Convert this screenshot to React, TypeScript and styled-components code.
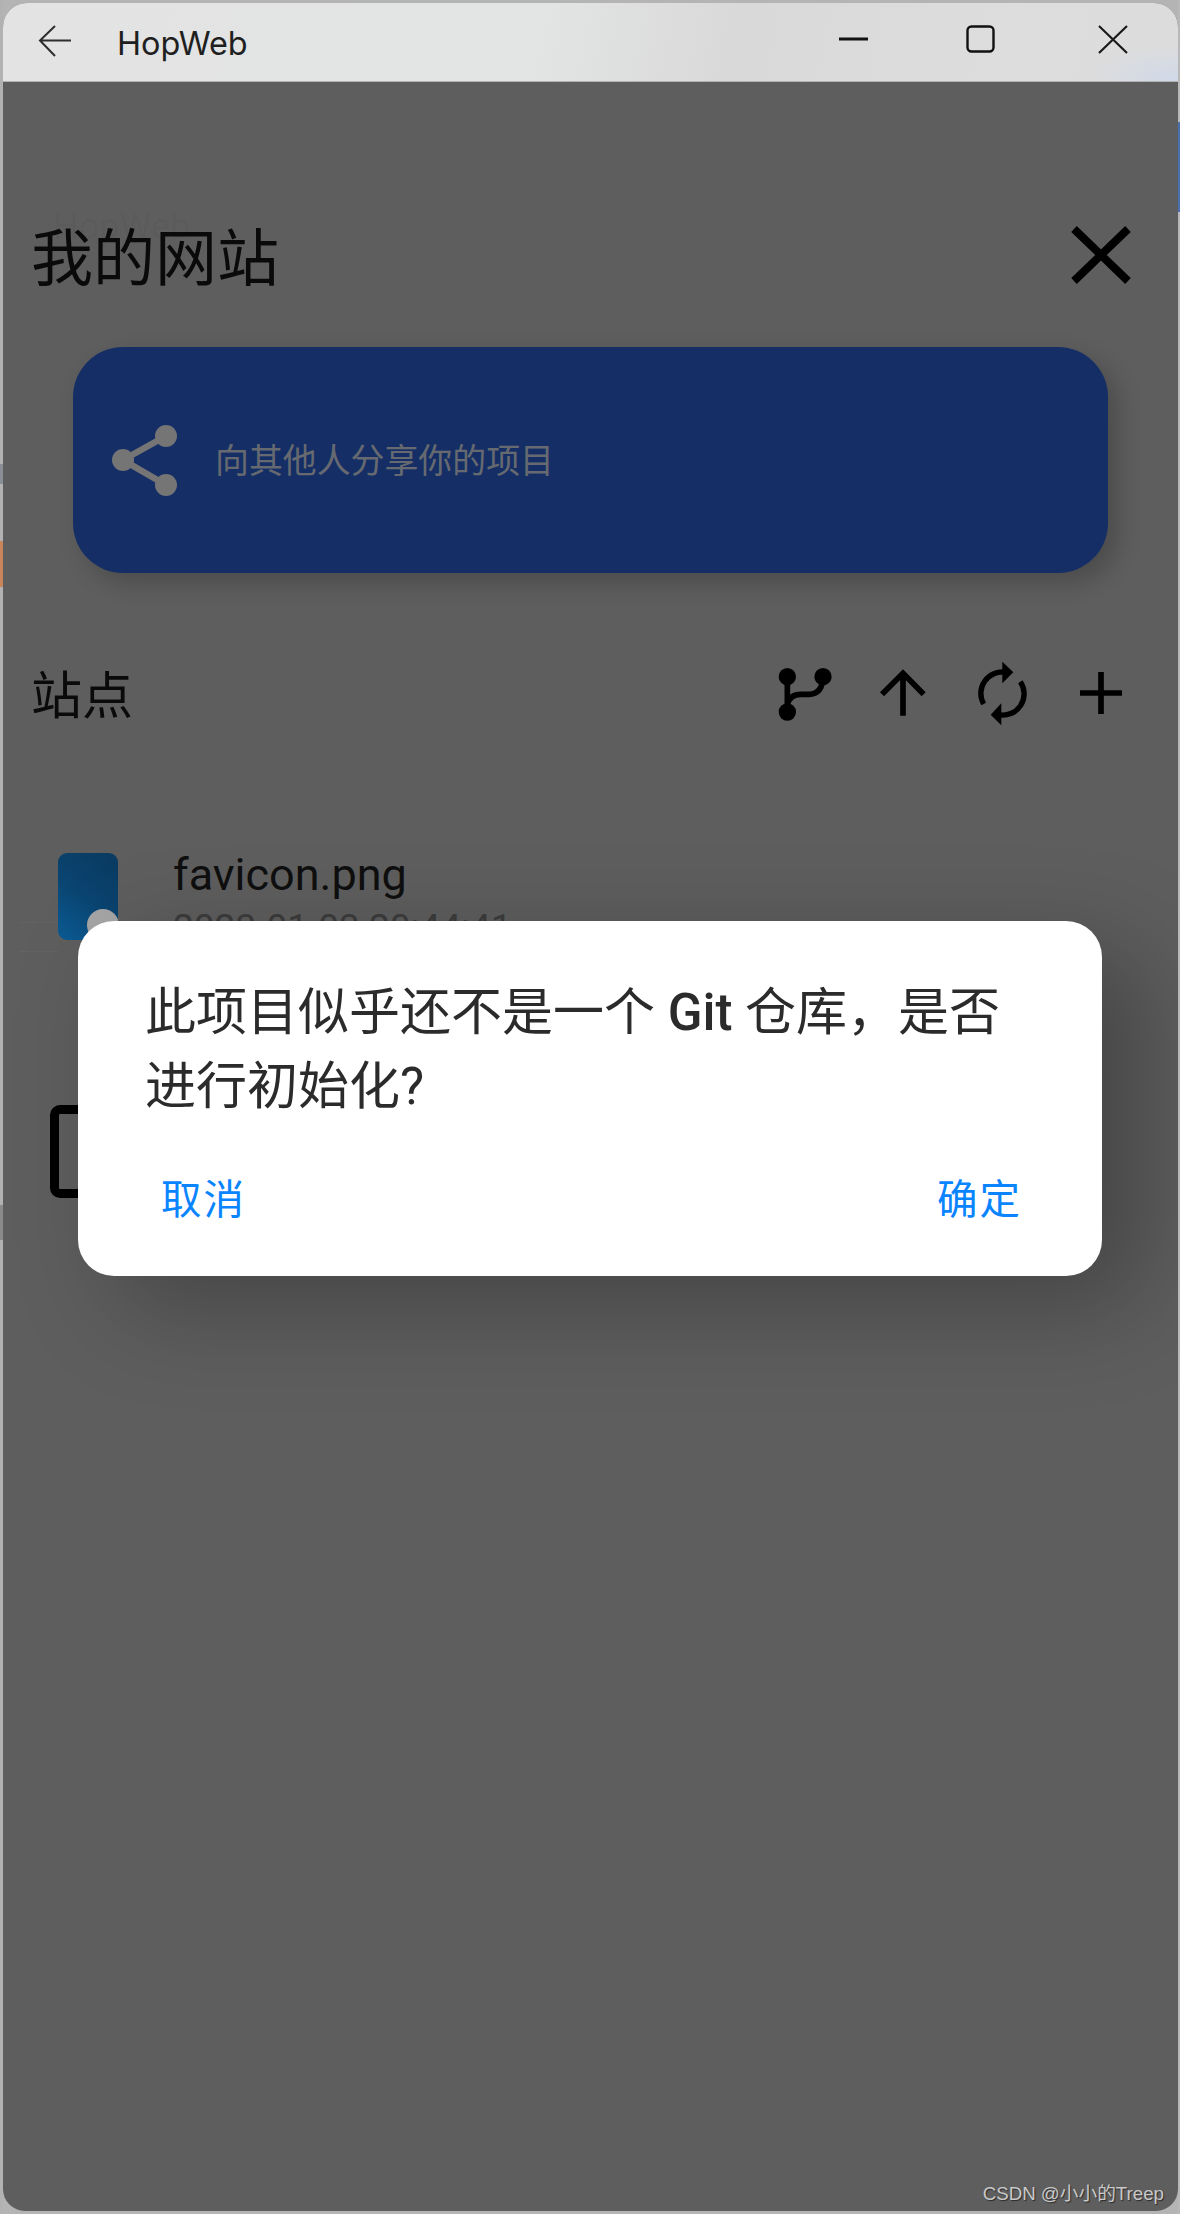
import React from "react";
import styled, { createGlobalStyle } from "styled-components";

const Global = createGlobalStyle`
  html, body { margin: 0; padding: 0; }
  body { width: 1180px; height: 2214px; overflow: hidden; font-family: Roboto, "Noto Sans CJK SC", sans-serif; }
  * { box-sizing: border-box; }
`;

const Desktop = styled.div`
  width: 1180px;
  height: 2214px;
  padding: 3px 2px 3px 3px;
  background:
    linear-gradient(180deg, #b2b2b2 0, #b2b2b2 464px, #8a8f96 464px, #8a8f96 484px, #b2b2b2 484px, #b2b2b2 541px,
      #c8845a 541px, #c8845a 587px, #b2b2b2 587px, #b2b2b2 1205px, #8a8a8c 1205px, #8a8a8c 1240px, #b2b2b2 1240px) left / 3px 100% no-repeat,
    linear-gradient(180deg, #b8b8b8 0, #b8b8b8 122px, #4a6fb0 122px, #4a6fb0 212px, #b8b8b8 212px) right / 2px 100% no-repeat,
    #b4b4b4;
`;

const Window = styled.div`
  position: relative;
  height: 100%;
  display: flex;
  flex-direction: column;
  border-radius: 24px 24px 22px 22px;
  overflow: hidden;
  background: #5e5e5e;
`;

const TitleBar = styled.header`
  height: 79px;
  flex: none;
  display: flex;
  align-items: center;
  padding: 0 50px 0 35px;
  border-bottom: 1px solid #b3b3b3;
  background:
    radial-gradient(90px 36px at 100% 100%, #d0d9e9 0, rgba(208, 217, 233, 0) 100%),
    linear-gradient(102deg, #e3e3e3 0, #e3e4e4 45%, #d9d9d9 62%, #dddddd 85%, #dcdcdc 100%);
`;

const AppName = styled.span`
  margin-left: 45px;
  font-family: Inter, sans-serif;
  font-size: 32.4px;
  line-height: 36px;
  color: #1f1f1f;
  position: relative;
  top: 2px;
`;

const WindowControls = styled.div`
  margin-left: auto;
  display: flex;
  align-items: center;
  position: relative;
  top: -3px;
`;

const MaximizeSlot = styled.span`
  margin: 0 103px 0 98px;
`;

const Stage = styled.main`
  position: relative;
  flex: 1;
  padding-top: 137px;
`;

const PageHeader = styled.div`
  position: relative;
  height: 80px;
  display: flex;
  align-items: center;
  justify-content: space-between;
  padding: 0 47px 0 28px;
`;

const GhostLabel = styled.span`
  position: absolute;
  left: 50px;
  top: -13px;
  font-size: 36px;
  color: rgba(0, 0, 0, 0.035);
`;

const PageTitle = styled.h1`
  margin: 0;
  font-size: 62px;
  line-height: 80px;
  font-weight: 400;
  color: #0a0a0a;
  position: relative;
  top: 1px;
`;

const CloseSlot = styled.span`
  position: relative;
  top: -4px;
`;

const ShareCard = styled.section`
  margin: 48px 0 0 70px;
  width: 1035px;
  height: 226px;
  display: flex;
  align-items: center;
  gap: 38px;
  padding-left: 39px;
  border-radius: 50px;
  background: #152f66;
  box-shadow: 10px 10px 24px rgba(0, 0, 0, 0.2);
`;

const ShareText = styled.span`
  font-size: 33.9px;
  line-height: 40px;
  color: #666a70;
  position: relative;
  top: 2px;
`;

const SectionRow = styled.div`
  margin-top: 81px;
  height: 80px;
  display: flex;
  align-items: center;
  justify-content: space-between;
  padding: 0 42px 0 28px;
`;

const SectionTitle = styled.h2`
  margin: 0;
  font-size: 51px;
  line-height: 80px;
  font-weight: 400;
  color: #0a0a0a;
  position: relative;
  top: 3px;
`;

const Toolbar = styled.div`
  display: flex;
  gap: 29px;
  position: relative;
  top: -1px;
`;

const ToolButton = styled.span`
  width: 70px;
  height: 70px;
  display: flex;
  align-items: center;
  justify-content: center;
`;

const FileRow = styled.div`
  position: relative;
  margin: 119px 0 0 55px;
  display: flex;
  align-items: flex-start;
  gap: 55px;
  &::before {
    content: "";
    position: absolute;
    left: -38px;
    top: 69px;
    width: 38px;
    height: 28px;
    border-top: 1px solid rgba(255, 255, 255, 0.035);
    border-bottom: 1px solid rgba(255, 255, 255, 0.035);
  }
`;

const FileThumb = styled.div`
  position: relative;
  width: 60px;
  height: 87px;
  border-radius: 9px;
  overflow: hidden;
  background: linear-gradient(215deg, #0a3a60 0, #0a4470 50%, #0b5c96 100%);
`;

const ThumbBadge = styled.span`
  position: absolute;
  left: 29px;
  top: 56px;
  width: 32px;
  height: 32px;
  border-radius: 50%;
  background: #a6a6a6;
`;

const FileText = styled.div`
  margin-top: -3px;
  display: flex;
  flex-direction: column;
`;

const FileName = styled.span`
  font-size: 45px;
  line-height: 50px;
  color: #0f0f0f;
`;

const FileDate = styled.span`
  margin-top: 6px;
  font-size: 37px;
  line-height: 44px;
  color: #3c3c3c;
`;

const FolderBox = styled.div`
  margin: 155px 0 0 47px;
  width: 80px;
  height: 93px;
  border: 9px solid #000;
  border-radius: 10px;
`;

const Dialog = styled.div`
  position: absolute;
  left: 75px;
  top: 839px;
  width: 1024px;
  height: 355px;
  padding: 55px 80px 0 67px;
  background: #fff;
  border-radius: 36px;
  box-shadow: 40px 30px 100px rgba(0, 0, 0, 0.27);
`;

const DialogText = styled.p`
  margin: 0;
  width: 880px;
  font-size: 51px;
  line-height: 74px;
  color: #2b2b2b;
  b {
    font-weight: 500;
  }
`;

const DialogActions = styled.div`
  margin-top: 51px;
  display: flex;
  justify-content: space-between;
  padding-left: 16px;
`;

const DialogButton = styled.span`
  font-size: 40.5px;
  line-height: 50px;
  letter-spacing: 2px;
  color: #0a84ff;
`;

const Watermark = styled.span`
  position: absolute;
  right: 14px;
  bottom: 6px;
  font-family: "Liberation Sans", "Noto Sans CJK SC", sans-serif;
  font-size: 18.7px;
  line-height: 22px;
  color: #c9c9c9;
  text-shadow: 1px 1px 1px rgba(0, 0, 0, 0.55);
`;

const Icon = styled.svg`
  display: block;
  flex: none;
`;

const BackArrow = () => (
  <Icon width="34" height="34" viewBox="0 0 34 34" fill="none" stroke="#2e2e2e" strokeWidth="2">
    <path d="M33 15.5H2M17 1 2 15.5 17 31" />
  </Icon>
);

const MinimizeIcon = () => (
  <Icon width="29" height="4" viewBox="0 0 29 4"><rect width="29" height="3" y="0.5" fill="#111" /></Icon>
);

const MaximizeIcon = () => (
  <Icon width="29" height="28" viewBox="0 0 29 28" fill="none" stroke="#111" strokeWidth="2.4">
    <rect x="1.5" y="1.5" width="26" height="25" rx="4" />
  </Icon>
);

const WinCloseIcon = () => (
  <Icon width="30" height="29" viewBox="0 0 30 29" fill="none" stroke="#1a1a1a" strokeWidth="2.2">
    <path d="M1 1 29 28M29 1 1 28" />
  </Icon>
);

const BigClose = () => (
  <Icon width="60" height="58" viewBox="0 0 60 58" fill="none" stroke="#000" strokeWidth="8">
    <path d="M3 3 57 55M57 3 3 55" />
  </Icon>
);

const ShareIcon = () => (
  <Icon width="65" height="71" viewBox="0 0 65 71" fill="#757575" stroke="#757575">
    <path d="M54 11 11 35 54 60" fill="none" strokeWidth="6.5" />
    <circle cx="54" cy="11" r="11" stroke="none" />
    <circle cx="54" cy="60" r="11" stroke="none" />
    <circle cx="11" cy="35" r="11" stroke="none" />
  </Icon>
);

const BranchIcon = () => (
  <Icon width="60" height="64" viewBox="70 60 180 192" fill="none" stroke="#000" strokeWidth="17">
    <circle cx="110" cy="107" r="26" fill="#000" stroke="none" />
    <circle cx="217" cy="107" r="26" fill="#000" stroke="none" />
    <circle cx="110" cy="213" r="26" fill="#000" stroke="none" />
    <path d="M110 107V213M110 190Q118 160 150 160H175Q215 160 217 107" />
  </Icon>
);

const ArrowUpIcon = () => (
  <Icon width="48" height="50" viewBox="388 88 144 150" fill="none" stroke="#000" strokeWidth="17">
    <path d="M397 167 460 104 522 167M460 104V231" />
  </Icon>
);

const SyncIcon = () => (
  <Icon width="50" height="66" viewBox="682 60 150 198" fill="none" stroke="#000" strokeWidth="16">
    <path d="M702 192A64 64 0 0 1 768 97" />
    <path d="M812 125A64 64 0 0 1 746 224" />
    <path d="M758 65 791 97 758 130Z" fill="#000" stroke="none" />
    <path d="M755 190 723 224 755 256Z" fill="#000" stroke="none" />
  </Icon>
);

const PlusIcon = () => (
  <Icon width="42" height="42" viewBox="990 97 126 126" fill="none" stroke="#000" strokeWidth="17">
    <path d="M990 160H1116M1053 97V223" />
  </Icon>
);

export default function App() {
  return (
    <>
      <Global />
      <Desktop lang="zh-CN">
        <Window>
          <TitleBar>
            <BackArrow />
            <AppName>HopWeb</AppName>
            <WindowControls>
              <MinimizeIcon />
              <MaximizeSlot><MaximizeIcon /></MaximizeSlot>
              <WinCloseIcon />
            </WindowControls>
          </TitleBar>
          <Stage>
            <PageHeader>
              <GhostLabel>HopWeb</GhostLabel>
              <PageTitle>我的网站</PageTitle>
              <CloseSlot><BigClose /></CloseSlot>
            </PageHeader>
            <ShareCard>
              <ShareIcon />
              <ShareText>向其他人分享你的项目</ShareText>
            </ShareCard>
            <SectionRow>
              <SectionTitle>站点</SectionTitle>
              <Toolbar>
                <ToolButton><BranchIcon /></ToolButton>
                <ToolButton><ArrowUpIcon /></ToolButton>
                <ToolButton><SyncIcon /></ToolButton>
                <ToolButton><PlusIcon /></ToolButton>
              </Toolbar>
            </SectionRow>
            <FileRow>
              <FileThumb>
                <ThumbBadge />
              </FileThumb>
              <FileText>
                <FileName>favicon.png</FileName>
                <FileDate>2023-01-03 20:44:41</FileDate>
              </FileText>
            </FileRow>
            <FolderBox />
            <Dialog>
              <DialogText>
                此项目似乎还不是一个 <b>Git</b> 仓库，是否进行初始化?
              </DialogText>
              <DialogActions>
                <DialogButton>取消</DialogButton>
                <DialogButton>确定</DialogButton>
              </DialogActions>
            </Dialog>
          </Stage>
          <Watermark>CSDN @小小的Treep</Watermark>
        </Window>
      </Desktop>
    </>
  );
}
